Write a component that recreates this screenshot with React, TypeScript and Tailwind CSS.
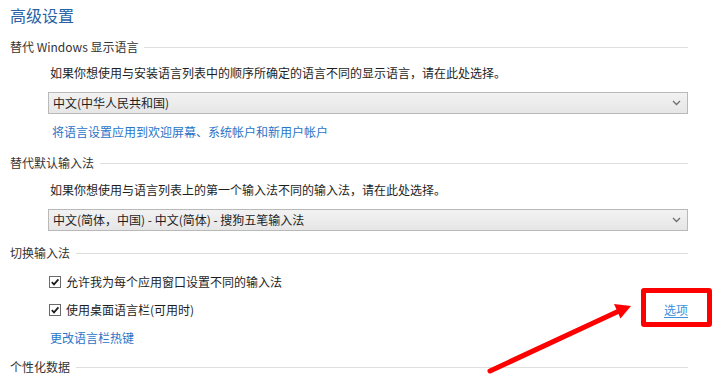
import React from "react";

const font = { fontFamily: '"Noto Sans CJK SC", "Noto Sans", sans-serif' };

function Header({ text, className = "" }: { text: string; className?: string }) {
  return (
    <div className={`flex items-center h-[20px] ${className}`}>
      <span className="text-[12px] text-[#333333] leading-[20px] whitespace-nowrap">{text}</span>
      <div className="flex-1 h-px bg-[#dedede] ml-[6px]" />
    </div>
  );
}

function Select({ value, className = "" }: { value: string; className?: string }) {
  return (
    <div
      className={`ml-[38px] h-[22px] border border-[#b9b9b9] bg-gradient-to-b from-[#f2f2f2] to-[#e6e6e6] flex items-center justify-between pl-[4px] pr-[6px] ${className}`}
    >
      <span className="text-[12px] text-[#1e1e1e] leading-[20px]">{value}</span>
      <svg width="9" height="6" viewBox="0 0 9 6">
        <path d="M1 1 L4.5 4.5 L8 1" fill="none" stroke="#6d6d6d" strokeWidth="1.3" />
      </svg>
    </div>
  );
}

function Check({ label, className = "", right }: { label: string; className?: string; right?: React.ReactNode }) {
  return (
    <div className={`flex items-center h-[18px] ml-[39px] ${className}`}>
      <div className="w-[12px] h-[12px] border border-[#6a6a6a] bg-white flex items-center justify-center">
        <svg width="10" height="10" viewBox="0 0 10 10">
          <path d="M1.8 5.2 L4 7.4 L8.4 2.4" fill="none" stroke="#1a1a1a" strokeWidth="1.7" />
        </svg>
      </div>
      <span className="ml-[5px] text-[12px] text-[#1e1e1e] leading-[18px]">{label}</span>
      {right}
    </div>
  );
}

export default function App() {
  return (
    <div className="relative w-[720px] h-[377px] bg-white overflow-hidden" style={font}>
      <div className="pl-[10px] w-[688px] flex flex-col">
        <div className="pt-[5px] h-[25px] text-[16px] leading-[20px] text-[#2a62a6]">高级设置</div>

        <Header text="替代 Windows 显示语言" className="mt-[12px]" />
        <div className="mt-[7px] ml-[40px] h-[18px] text-[12px] leading-[18px] text-[#1e1e1e]">
          如果你想使用与安装语言列表中的顺序所确定的语言不同的显示语言，请在此处选择。
        </div>
        <Select value="中文(中华人民共和国)" className="mt-[10px]" />
        <div className="mt-[9px] ml-[42px] h-[18px] text-[12px] leading-[18px] text-[#2a74c8]">
          将语言设置应用到欢迎屏幕、系统帐户和新用户帐户
        </div>

        <Header text="替代默认输入法" className="mt-[12px]" />
        <div className="mt-[8px] ml-[40px] h-[18px] text-[12px] leading-[18px] text-[#1e1e1e]">
          如果你想使用与语言列表上的第一个输入法不同的输入法，请在此处选择。
        </div>
        <Select value="中文(简体，中国) - 中文(简体) - 搜狗五笔输入法" className="mt-[10px]" />

        <Header text="切换输入法" className="mt-[12px]" />
        <Check label="允许我为每个应用窗口设置不同的输入法" className="mt-[10px]" />
        <Check
          label="使用桌面语言栏(可用时)"
          className="mt-[10px]"
          right={
            <span className="ml-auto text-[12px] leading-[18px] text-[#3b8fdc] underline underline-offset-2">选项</span>
          }
        />
        <div className="mt-[10px] ml-[40px] h-[18px] text-[12px] leading-[18px] text-[#2a74c8]">更改语言栏热键</div>

        <Header text="个性化数据" className="mt-[10px]" />
      </div>

      {/* annotation box */}
      <div className="absolute left-[641px] top-[288px] w-[71px] h-[39px] border-[5px] border-[#ff0000] rounded-[3px]" />
      {/* annotation arrow */}
      <svg className="absolute left-0 top-0" width="720" height="377" viewBox="0 0 720 377">
        <line x1="490" y1="371" x2="619" y2="311" stroke="#ff0000" strokeWidth="5" strokeLinecap="round" />
        <polygon points="631,306 620.5,318.5 614,304" fill="#ff0000" />
      </svg>
    </div>
  );
}
